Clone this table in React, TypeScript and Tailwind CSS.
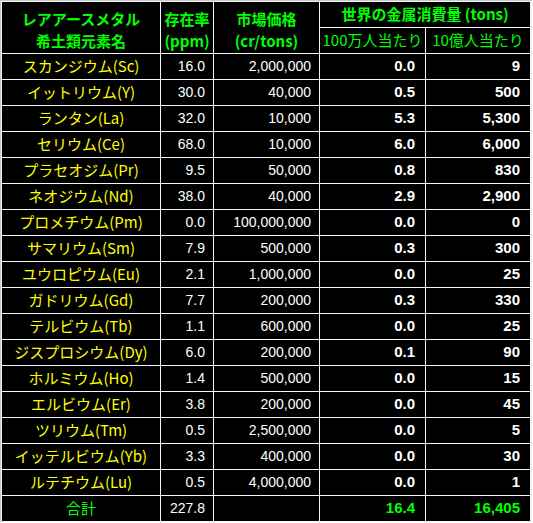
import React from 'react';

// element rows: name, abundance (ppm), price (cr/tons), per 1M people, per 1B people
const rows: [string, string, string, string, string][] = [
  ['スカンジウム(Sc)', '16.0', '2,000,000', '0.0', '9'],
  ['イットリウム(Y)', '30.0', '40,000', '0.5', '500'],
  ['ランタン(La)', '32.0', '10,000', '5.3', '5,300'],
  ['セリウム(Ce)', '68.0', '10,000', '6.0', '6,000'],
  ['プラセオジム(Pr)', '9.5', '50,000', '0.8', '830'],
  ['ネオジウム(Nd)', '38.0', '40,000', '2.9', '2,900'],
  ['プロメチウム(Pm)', '0.0', '100,000,000', '0.0', '0'],
  ['サマリウム(Sm)', '7.9', '500,000', '0.3', '300'],
  ['ユウロピウム(Eu)', '2.1', '1,000,000', '0.0', '25'],
  ['ガドリウム(Gd)', '7.7', '200,000', '0.3', '330'],
  ['テルビウム(Tb)', '1.1', '600,000', '0.0', '25'],
  ['ジスプロシウム(Dy)', '6.0', '200,000', '0.1', '90'],
  ['ホルミウム(Ho)', '1.4', '500,000', '0.0', '15'],
  ['エルビウム(Er)', '3.8', '200,000', '0.0', '45'],
  ['ツリウム(Tm)', '0.5', '2,500,000', '0.0', '5'],
  ['イッテルビウム(Yb)', '3.3', '400,000', '0.0', '30'],
  ['ルテチウム(Lu)', '0.5', '4,000,000', '0.0', '1'],
];

const jp = "font-['Noto_Sans_CJK_JP',sans-serif]";
const num = "font-['Liberation_Sans',Arial,sans-serif]";

export default function App() {
  return (
    <div className="w-[533px] h-[523px] bg-white">
      <div className="w-[532px] border-l border-t border-[#c8c8c8]">
        <div className="grid grid-cols-[158px_52px_105px_105px_104px] auto-rows-[25px] gap-px p-px bg-[#f4f4f4] w-[531px]">
          {/* Header */}
          <div className={`row-span-2 bg-black flex flex-col items-center justify-center pt-[5px] text-[#00ff00] font-bold text-[15px] leading-[22px] ${jp}`}>
            <span>レアアースメタル</span>
            <span>希土類元素名</span>
          </div>
          <div className={`row-span-2 bg-black flex flex-col items-center justify-center pt-[5px] text-[#00ff00] font-bold text-[15px] leading-[22px] ${jp}`}>
            <span>存在率</span>
            <span>(ppm)</span>
          </div>
          <div className={`row-span-2 bg-black flex flex-col items-center justify-center pt-[5px] text-[#00ff00] font-bold text-[15px] leading-[22px] ${jp}`}>
            <span>市場価格</span>
            <span>(cr/tons)</span>
          </div>
          <div className={`col-span-2 bg-black flex items-center justify-center text-[#00ff00] font-bold text-[15px] ${jp}`}>
            世界の金属消費量 (tons)
          </div>
          <div className={`bg-black flex items-center justify-center text-[#00ff00] text-[15px] ${jp}`}>
            100万人当たり
          </div>
          <div className={`bg-black flex items-center justify-center text-[#00ff00] text-[15px] ${jp}`}>
            10億人当たり
          </div>

          {/* Body */}
          {rows.map(([name, ppm, price, m, b]) => (
            <React.Fragment key={name}>
              <div className={`bg-black flex items-center justify-center text-[#ffff00] text-[15px] ${jp}`}>{name}</div>
              <div className={`bg-black flex items-center justify-end pr-2 text-white text-[14px] ${num}`}>{ppm}</div>
              <div className={`bg-black flex items-center justify-end pr-2 text-white text-[14px] ${num}`}>{price}</div>
              <div className={`bg-black flex items-center justify-end pr-[10px] text-white font-bold text-[15px] ${num}`}>{m}</div>
              <div className={`bg-black flex items-center justify-end pr-[10px] text-white font-bold text-[15px] ${num}`}>{b}</div>
            </React.Fragment>
          ))}

          {/* Total */}
          <div className={`bg-black flex items-center justify-center text-[#00ff00] text-[15px] ${jp}`}>合計</div>
          <div className={`bg-black flex items-center justify-end pr-2 text-white text-[14px] ${num}`}>227.8</div>
          <div className="bg-black" />
          <div className={`bg-black flex items-center justify-end pr-[10px] text-[#00ff00] font-bold text-[15px] ${num}`}>16.4</div>
          <div className={`bg-black flex items-center justify-end pr-[10px] text-[#00ff00] font-bold text-[15px] ${num}`}>16,405</div>
        </div>
      </div>
    </div>
  );
}
